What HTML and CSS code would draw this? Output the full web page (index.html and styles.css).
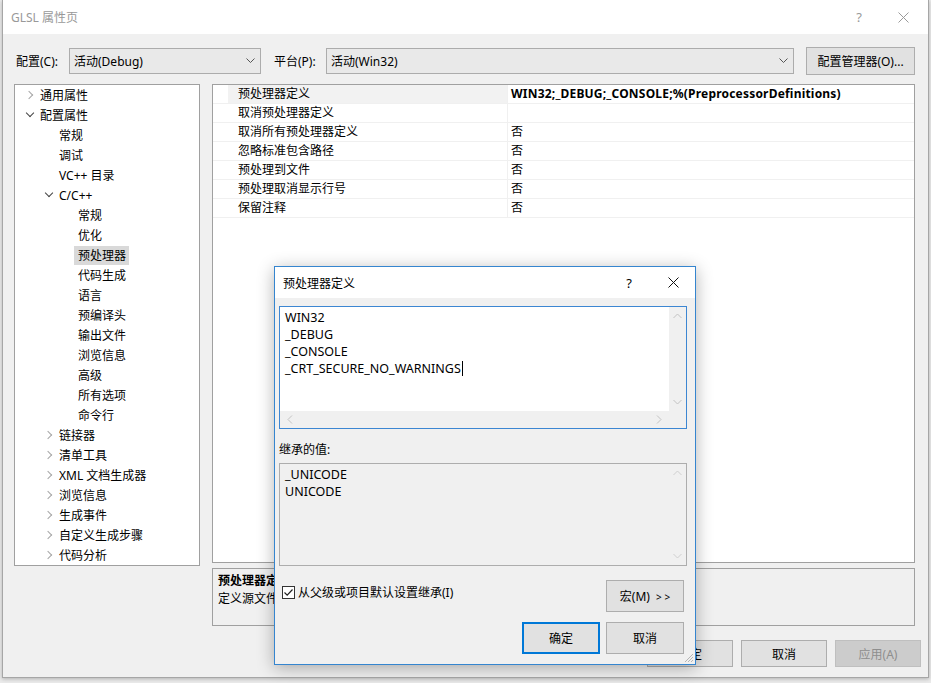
FILE: index.html
```html
<!DOCTYPE html>
<html lang="zh-CN">
<head>
  <meta charset="UTF-8" />
  <title>GLSL 属性页</title>
  <link rel="stylesheet" href="styles.css">
</head>
<body>
  <div class="window">
    <div class="titlebar">
      <span class="title">GLSL 属性页</span>
      <span class="tb-help">?</span>
      <svg class="tb-close" width="11" height="11" viewBox="0 0 11 11"><path d="M0.5 0.5 L10.5 10.5 M10.5 0.5 L0.5 10.5" stroke="#9a9a9a" stroke-width="1" fill="none"/></svg>
    </div>

    <div class="client">
      <div class="toolbar">
        <span class="tool-label label-config">配置(C):</span>
        <div class="combo combo-config">
          <span>活动(Debug)</span>
          <svg width="9" height="6" viewBox="0 0 9 6"><polyline points="0.5,0.5 4.5,4.5 8.5,0.5" stroke="#555" fill="none"/></svg>
        </div>
        <span class="tool-label label-platform">平台(P):</span>
        <div class="combo combo-platform">
          <span>活动(Win32)</span>
          <svg width="9" height="6" viewBox="0 0 9 6"><polyline points="0.5,0.5 4.5,4.5 8.5,0.5" stroke="#555" fill="none"/></svg>
        </div>
        <button class="btn btn-manager">配置管理器(O)...</button>
      </div>

      <div class="main">
        <div class="tree">
          <div class="node l0"><span class="arrow closed"></span>通用属性</div>
          <div class="node l0"><span class="arrow open"></span>配置属性</div>
          <div class="node l1"><span class="arrow"></span>常规</div>
          <div class="node l1"><span class="arrow"></span>调试</div>
          <div class="node l1"><span class="arrow"></span>VC++ 目录</div>
          <div class="node l1"><span class="arrow open"></span>C/C++</div>
          <div class="node l2"><span class="arrow"></span>常规</div>
          <div class="node l2"><span class="arrow"></span>优化</div>
          <div class="node l2"><span class="arrow"></span><span class="selected">预处理器</span></div>
          <div class="node l2"><span class="arrow"></span>代码生成</div>
          <div class="node l2"><span class="arrow"></span>语言</div>
          <div class="node l2"><span class="arrow"></span>预编译头</div>
          <div class="node l2"><span class="arrow"></span>输出文件</div>
          <div class="node l2"><span class="arrow"></span>浏览信息</div>
          <div class="node l2"><span class="arrow"></span>高级</div>
          <div class="node l2"><span class="arrow"></span>所有选项</div>
          <div class="node l2"><span class="arrow"></span>命令行</div>
          <div class="node l1"><span class="arrow closed"></span>链接器</div>
          <div class="node l1"><span class="arrow closed"></span>清单工具</div>
          <div class="node l1"><span class="arrow closed"></span>XML 文档生成器</div>
          <div class="node l1"><span class="arrow closed"></span>浏览信息</div>
          <div class="node l1"><span class="arrow closed"></span>生成事件</div>
          <div class="node l1"><span class="arrow closed"></span>自定义生成步骤</div>
          <div class="node l1"><span class="arrow closed"></span>代码分析</div>
        </div>

        <div class="right">
          <div class="grid">
            <div class="prop current"><span class="gutter"></span><span class="name">预处理器定义</span><span class="value bold">WIN32;_DEBUG;_CONSOLE;%(PreprocessorDefinitions)</span></div>
            <div class="prop"><span class="gutter"></span><span class="name">取消预处理器定义</span><span class="value"></span></div>
            <div class="prop"><span class="gutter"></span><span class="name">取消所有预处理器定义</span><span class="value">否</span></div>
            <div class="prop"><span class="gutter"></span><span class="name">忽略标准包含路径</span><span class="value">否</span></div>
            <div class="prop"><span class="gutter"></span><span class="name">预处理到文件</span><span class="value">否</span></div>
            <div class="prop"><span class="gutter"></span><span class="name">预处理取消显示行号</span><span class="value">否</span></div>
            <div class="prop"><span class="gutter"></span><span class="name">保留注释</span><span class="value">否</span></div>
          </div>
          <div class="desc">
            <div class="desc-title">预处理器定</div>
            <div class="desc-text">定义源文件</div>
          </div>
        </div>
      </div>

      <div class="footer">
        <button class="btn btn-foot">确定</button>
        <button class="btn btn-foot">取消</button>
        <button class="btn btn-foot disabled">应用(A)</button>
      </div>
    </div>
  </div>

  <div class="dialog">
    <div class="dlg-titlebar">
      <span class="dlg-title">预处理器定义</span>
      <span class="dlg-help">?</span>
      <svg class="dlg-close" width="11" height="11" viewBox="0 0 11 11"><path d="M0.5 0.5 L10.5 10.5 M10.5 0.5 L0.5 10.5" stroke="#111" stroke-width="1" fill="none"/></svg>
    </div>
    <div class="dlg-body">
      <div class="edit-box">
        <div class="edit-text">WIN32<br>_DEBUG<br>_CONSOLE<br>_CRT_SECURE_NO_WARNINGS<span class="caret"></span></div>
        <div class="vscroll">
          <svg width="9" height="6" viewBox="0 0 9 6"><polyline points="0.5,5 4.5,1 8.5,5" stroke="#c2c2c2" fill="none"/></svg>
          <svg width="9" height="6" viewBox="0 0 9 6"><polyline points="0.5,1 4.5,5 8.5,1" stroke="#c2c2c2" fill="none"/></svg>
        </div>
        <div class="hscroll">
          <svg width="6" height="9" viewBox="0 0 6 9"><polyline points="5,0.5 1,4.5 5,8.5" stroke="#c2c2c2" fill="none"/></svg>
          <svg width="6" height="9" viewBox="0 0 6 9"><polyline points="1,0.5 5,4.5 1,8.5" stroke="#c2c2c2" fill="none"/></svg>
        </div>
        <div class="corner"></div>
      </div>

      <div class="inherit-label">继承的值:</div>
      <div class="inherit-box">
        <div class="edit-text">_UNICODE<br>UNICODE</div>
        <div class="vscroll">
          <svg width="9" height="6" viewBox="0 0 9 6"><polyline points="0.5,5 4.5,1 8.5,5" stroke="#cfcfcf" fill="none"/></svg>
          <svg width="9" height="6" viewBox="0 0 9 6"><polyline points="0.5,1 4.5,5 8.5,1" stroke="#cfcfcf" fill="none"/></svg>
        </div>
      </div>

      <div class="option-row">
        <label class="check">
          <svg width="13" height="13" viewBox="0 0 13 13"><rect x="0.5" y="0.5" width="12" height="12" fill="#fff" stroke="#333"/><path d="M2.5 6.5 L5.2 9.2 L10.5 3.5" stroke="#222" stroke-width="1.2" fill="none"/></svg>
          <span>从父级或项目默认设置继承(I)</span>
        </label>
        <button class="btn btn-dlg">宏(M) <span class="gt">&gt; &gt;</span></button>
      </div>

      <div class="dlg-buttons">
        <button class="btn btn-dlg default">确定</button>
        <button class="btn btn-dlg">取消</button>
      </div>
    </div>
    <svg class="grip" width="11" height="11" viewBox="0 0 11 11">
      <path d="M10 2 L2 10 M10 5 L5 10 M10 8 L8 10" stroke="#b5b5b5" stroke-width="1" fill="none"/>
    </svg>
  </div>
</body>
</html>
```

FILE: styles.css
```css
* {
  box-sizing: border-box;
  margin: 0;
  padding: 0;
}

body {
  width: 931px;
  height: 683px;
  overflow: hidden;
  background-color: #ebebeb;
  font-family: "Noto Sans", "Noto Sans CJK SC", sans-serif;
  font-size: 12px;
  color: #000;
}

.window {
  margin-left: 2px;
  width: 927px;
  height: 678px;
  background-color: #f0f0f0;
  border: 1px solid #a6a6a6;
  border-top: none;
  box-shadow: 0 1px 4px rgba(0, 0, 0, 0.25);
}

.titlebar {
  height: 34px;
  background-color: #fff;
  display: flex;
  align-items: center;
  padding-left: 8px;
  color: #999;
}

.tb-help {
  margin-left: auto;
  margin-right: 36px;
  font-size: 13px;
}

.tb-close {
  margin-right: 19px;
}

.client {
  padding: 13px 12px 0 11px;
}

.toolbar {
  display: flex;
  align-items: center;
  height: 28px;
}

.tool-label {
  padding-left: 2px;
}

.label-config {
  width: 55px;
}

.label-platform {
  width: 54px;
  margin-left: 11px;
}

.combo {
  height: 26px;
  display: flex;
  align-items: center;
  justify-content: space-between;
  padding: 0 5px 0 4px;
  background-color: #e9e9e9;
  border: 1px solid #acacac;
}

.combo-config {
  width: 192px;
}

.combo-platform {
  width: 468px;
}

.btn {
  font-family: inherit;
  font-size: 12px;
  color: #000;
  background-color: #e1e1e1;
  border: 1px solid #adadad;
}

.btn-manager {
  width: 109px;
  height: 28px;
  margin-left: 12px;
}

.main {
  display: flex;
  margin-top: 9px;
  gap: 12px;
}

.tree {
  width: 186px;
  height: 482px;
  background-color: #fff;
  border: 1px solid #a0a0a0;
}

.node {
  height: 20px;
  display: flex;
  align-items: center;
  white-space: nowrap;
}

.l0 { padding-left: 10px; }
.l1 { padding-left: 29px; }
.l2 { padding-left: 48px; }

.arrow {
  width: 15px;
  height: 20px;
  flex-shrink: 0;
  position: relative;
}

.arrow.closed::before {
  content: "";
  position: absolute;
  left: 1px;
  top: 7px;
  width: 5px;
  height: 5px;
  border-right: 1.5px solid #a6a6a6;
  border-top: 1.5px solid #a6a6a6;
  transform: rotate(45deg);
}

.arrow.open::before {
  content: "";
  position: absolute;
  left: 2px;
  top: 5px;
  width: 5px;
  height: 5px;
  border-right: 1.5px solid #444;
  border-bottom: 1.5px solid #444;
  transform: rotate(45deg);
}

.selected {
  display: inline-block;
  height: 19px;
  line-height: 19px;
  margin-left: -4px;
  padding: 0 3px 0 4px;
  background-color: #d9d9d9;
}

.right {
  width: 703px;
  display: flex;
  flex-direction: column;
  gap: 5px;
}

.grid {
  height: 479px;
  background-color: #fff;
  border: 1px solid #a0a0a0;
}

.prop {
  display: grid;
  grid-template-columns: 15px 280px 1fr;
  height: 19px;
  line-height: 18px;
  border-bottom: 1px solid #f0f0f0;
  white-space: nowrap;
}

.prop .name {
  padding-left: 10px;
  border-right: 1px solid #f0f0f0;
}

.prop.current .name {
  background-color: #f2f2f2;
}

.prop .value {
  padding-left: 3px;
}

.bold {
  font-weight: bold;
  letter-spacing: 0.2px;
}

.desc {
  height: 58px;
  padding: 3px 5px;
  background-color: #f0f0f0;
  border: 1px solid #a0a0a0;
  line-height: 18px;
}

.desc-title {
  font-weight: bold;
}

.footer {
  display: flex;
  justify-content: flex-end;
  gap: 8px;
  margin-top: 14px;
  margin-right: -5px;
}

.btn-foot {
  width: 86px;
  height: 27px;
}

.btn-foot.disabled {
  background-color: #cccccc;
  border-color: #bfbfbf;
  color: #8e8e8e;
}

/* modal dialog on top of the property page */
.dialog {
  position: absolute;
  left: 274px;
  top: 266px;
  width: 422px;
  height: 399px;
  background-color: #f0f0f0;
  border: 1px solid #3585cf;
  box-shadow: 0 3px 16px rgba(0, 0, 0, 0.3);
}

.dlg-titlebar {
  height: 31px;
  background-color: #fff;
  display: flex;
  align-items: center;
  padding-left: 8px;
}

.dlg-help {
  margin-left: auto;
  margin-right: 36px;
  font-size: 13px;
}

.dlg-close {
  margin-right: 16px;
}

.dlg-body {
  padding: 8px 7px 0 4px;
}

.edit-box,
.inherit-box {
  display: grid;
  grid-template-columns: 1fr 17px;
  width: 408px;
}

.edit-box {
  grid-template-rows: 1fr 17px;
  height: 123px;
  background-color: #fff;
  border: 1px solid #3c86d2;
}

.inherit-box {
  height: 103px;
  margin-top: 3px;
  background-color: #f0f0f0;
  border: 1px solid #adadad;
}

.edit-text {
  padding: 2px 0 0 5px;
  line-height: 17px;
  font-size: 12.5px;
}

.caret {
  display: inline-block;
  width: 1px;
  height: 15px;
  margin-left: 1px;
  vertical-align: -3px;
  background-color: #000;
}

.vscroll {
  display: flex;
  flex-direction: column;
  justify-content: space-between;
  align-items: center;
  padding: 6px 0;
  background-color: #f0f0f0;
}

.hscroll {
  display: flex;
  justify-content: space-between;
  align-items: center;
  padding: 0 7px;
  background-color: #f0f0f0;
}

.corner {
  background-color: #f0f0f0;
}

.inherit-label {
  margin-top: 11px;
  height: 20px;
  line-height: 20px;
}

.option-row {
  display: flex;
  justify-content: space-between;
  align-items: flex-start;
  margin-top: 14px;
  width: 405px;
}

.check {
  display: flex;
  align-items: center;
  gap: 3px;
  height: 16px;
  margin-top: 4px;
  padding-left: 3px;
}

.btn-dlg {
  width: 78px;
  height: 32px;
}

.gt {
  font-size: 10px;
  margin-left: 3px;
}

.btn-dlg.default {
  border: 2px solid #0078d7;
}

.dlg-buttons {
  display: flex;
  justify-content: flex-end;
  gap: 6px;
  margin-top: 10px;
  width: 405px;
}

.grip {
  position: absolute;
  right: 1px;
  bottom: 1px;
}
```
